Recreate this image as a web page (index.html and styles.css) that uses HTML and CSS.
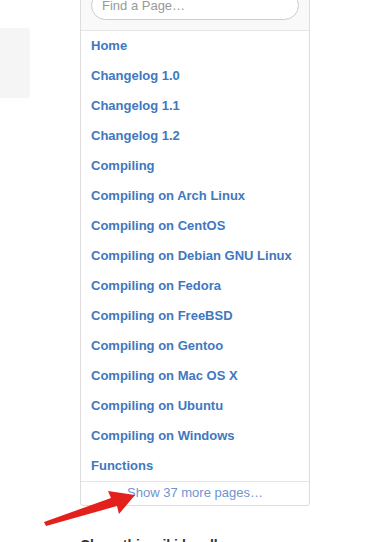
FILE: index.html
```html
<!DOCTYPE html>
<html lang="en">
<head>
  <meta charset="UTF-8" />
  <title>Wiki Pages</title>
  <link rel="stylesheet" href="styles.css">
</head>
<body>

  <div class="page">
    <!-- main content (cut off at the left) -->
    <div class="main">
      <div class="main-box"></div>
    </div>

    <!-- wiki sidebar -->
    <div class="sidebar">
      <div class="pages-box">
        <div class="filter-bar">
          <input type="text" class="filter-input" placeholder="Find a Page…" />
        </div>
        <ul class="page-list">
          <li><a href="#">Home</a></li>
          <li><a href="#">Changelog 1.0</a></li>
          <li><a href="#">Changelog 1.1</a></li>
          <li><a href="#">Changelog 1.2</a></li>
          <li><a href="#">Compiling</a></li>
          <li><a href="#">Compiling on Arch Linux</a></li>
          <li><a href="#">Compiling on CentOS</a></li>
          <li><a href="#">Compiling on Debian GNU Linux</a></li>
          <li><a href="#">Compiling on Fedora</a></li>
          <li><a href="#">Compiling on FreeBSD</a></li>
          <li><a href="#">Compiling on Gentoo</a></li>
          <li><a href="#">Compiling on Mac OS X</a></li>
          <li><a href="#">Compiling on Ubuntu</a></li>
          <li><a href="#">Compiling on Windows</a></li>
          <li><a href="#">Functions</a></li>
        </ul>
        <a href="#" class="more-pages">Show 37 more pages…</a>
      </div>

      <h3 class="clone-title">Clone this wiki locally</h3>
    </div>
  </div>

  <!-- annotation arrow -->
  <svg class="arrow" width="387" height="542" viewBox="0 0 387 542">
    <polygon points="44,522 111,498 108,491 135,495 119,514 117,506 46,526" fill="#e3201b" />
  </svg>

</body>
</html>
```

FILE: styles.css
```css
/* === GLOBAL === */
* {
  box-sizing: border-box;
  margin: 0;
  padding: 0;
}

body {
  background: #fff;
  color: #333;
  font-family: 'Liberation Sans', Arial, sans-serif;
  font-size: 13px;
  overflow: hidden;
}

a {
  text-decoration: none;
}

.page {
  display: flex;
  gap: 50px;
  margin-top: -20px;
}

/* === MAIN === */
.main {
  width: 30px;
}

.main-box {
  margin-top: 48px;
  height: 70px;
  background: #f5f5f5;
  border-radius: 0 3px 3px 0;
}

/* === SIDEBAR === */
.sidebar {
  width: 230px;
}

.pages-box {
  border: 1px solid #ddd;
  border-radius: 3px;
  background: #fff;
}

.filter-bar {
  background: #f9f9f9;
  padding: 10px;
  border-bottom: 1px solid #e5e5e5;
}

.filter-input {
  display: block;
  width: 100%;
  height: 29px;
  padding: 0 10px;
  border: 1px solid #ccc;
  border-radius: 15px;
  background: #fff;
  font-family: inherit;
  font-size: 13px;
  color: #333;
}

.filter-input::placeholder {
  color: #999;
}

.page-list {
  list-style: none;
}

.page-list li a {
  display: block;
  height: 30px;
  line-height: 30px;
  padding: 0 10px;
  color: #4078c0;
  font-weight: bold;
  font-size: 13px;
}

.more-pages {
  display: block;
  border-top: 1px solid #e5e5e5;
  height: 24px;
  line-height: 22px;
  text-align: center;
  color: #6f94d2;
  font-size: 13px;
}

.clone-title {
  margin-top: 29px;
  font-size: 14px;
  line-height: 20px;
  font-weight: bold;
  color: #333;
}

/* === ANNOTATION === */
.arrow {
  position: absolute;
  top: 0;
  left: 0;
  pointer-events: none;
}
```
